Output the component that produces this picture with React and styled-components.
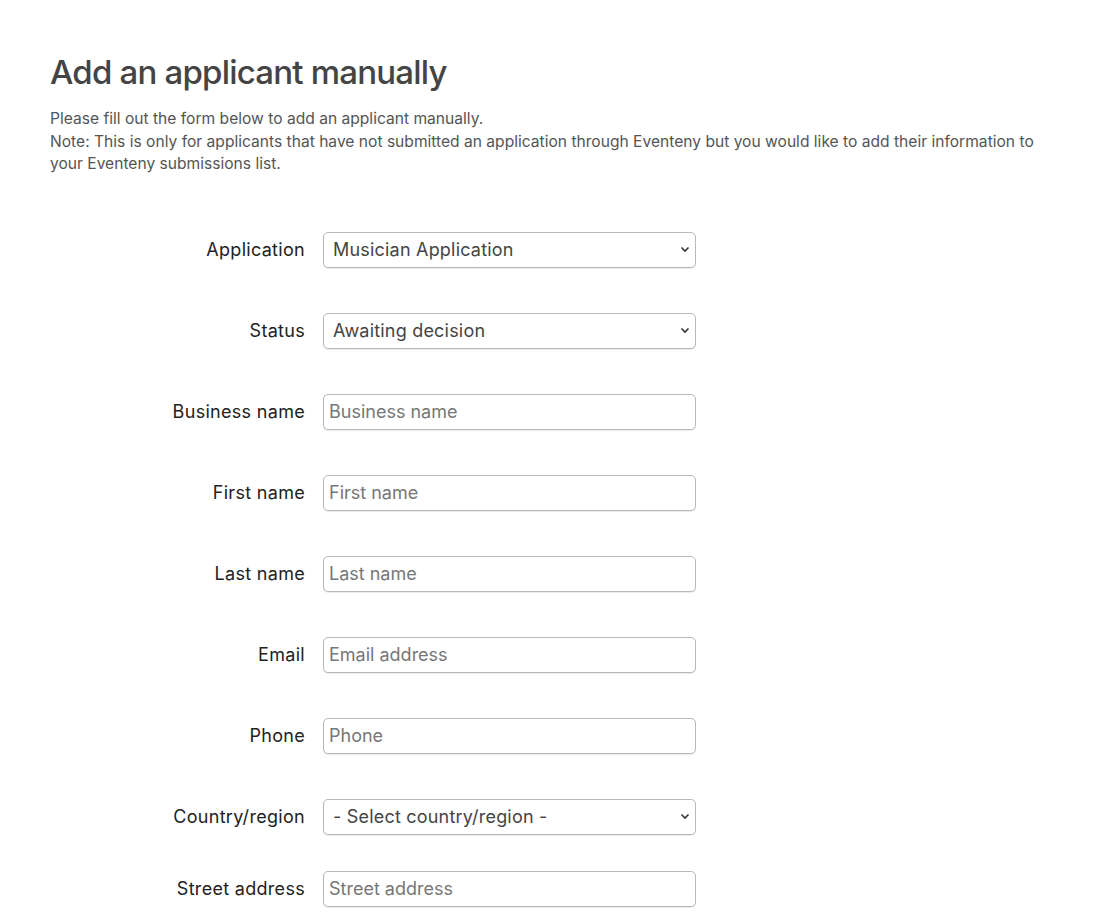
import React from "react";
import styled, { createGlobalStyle } from "styled-components";

const GlobalStyle = createGlobalStyle`
  body {
    margin: 0;
    background: #ffffff;
    font-family: Inter, "Noto Sans", sans-serif;
  }
`;

const Page = styled.div`
  padding: 50px 50px 0 50px;
  max-width: 1000px;
`;

const Title = styled.h1`
  margin: 0;
  font-size: 33px;
  line-height: 44px;
  font-weight: 500;
  color: #444444;
  letter-spacing: -0.8px;
`;

const Intro = styled.p`
  margin: 14px 0 0 0;
  font-size: 15.6px;
  line-height: 22.5px;
  color: #555555;
  letter-spacing: 0;
`;

const Form = styled.form`
  display: flex;
  flex-direction: column;
  margin-top: 56px;
`;

const Row = styled.div`
  display: grid;
  grid-template-columns: 255px 373px;
  column-gap: 18px;
  align-items: center;
  margin-bottom: ${(p) => (p.$tight ? "36px" : "45px")};
`;

const Label = styled.label`
  text-align: right;
  font-size: 18px;
  color: #222222;
  letter-spacing: 0.3px;
`;

const fieldBase = `
  box-sizing: border-box;
  width: 373px;
  height: 36px;
  border: 1px solid #b8b8b8;
  border-radius: 5px;
  box-shadow: 0 1px 1px rgba(0, 0, 0, 0.08);
  background: #ffffff;
  font-family: Inter, "Noto Sans", sans-serif;
  font-size: 18px;
  outline: none;
`;

const Input = styled.input`
  ${fieldBase}
  padding: 0 5px;
  letter-spacing: 0;
  color: #333333;
  &::placeholder {
    color: #777777;
  }
`;

const SelectWrap = styled.div`
  position: relative;
  width: 373px;
`;

const Select = styled.select`
  ${fieldBase}
  appearance: none;
  padding: 0 30px 0 9px;
  letter-spacing: 0.2px;
  color: #444444;
`;

const Chevron = styled.svg`
  position: absolute;
  right: 6px;
  top: 14px;
  width: 10px;
  height: 7px;
  pointer-events: none;
`;

function Dropdown({ id, value, options }) {
  return (
    <SelectWrap>
      <Select id={id} defaultValue={value}>
        {options.map((o) => (
          <option key={o}>{o}</option>
        ))}
      </Select>
      <Chevron viewBox="0 0 10 7">
        <path d="M1.5 1.5 L5 5 L8.5 1.5" fill="none" stroke="#333" strokeWidth="1.6" />
      </Chevron>
    </SelectWrap>
  );
}

const textFields = [
  ["business", "Business name", "Business name"],
  ["first", "First name", "First name"],
  ["last", "Last name", "Last name"],
  ["email", "Email", "Email address"],
  ["phone", "Phone", "Phone"],
];

export default function App() {
  return (
    <Page>
      <GlobalStyle />
      <Title>Add an applicant manually</Title>
      <Intro>
        Please fill out the form below to add an applicant manually.
        <br />
        Note: This is only for applicants that have not submitted an application through Eventeny but you would like to
        add their information to your Eventeny submissions list.
      </Intro>
      <Form>
        <Row>
          <Label htmlFor="application">Application</Label>
          <Dropdown id="application" value="Musician Application" options={["Musician Application", "Vendor Application"]} />
        </Row>
        <Row>
          <Label htmlFor="status">Status</Label>
          <Dropdown id="status" value="Awaiting decision" options={["Awaiting decision", "Approved", "Declined"]} />
        </Row>
        {textFields.map(([id, label, ph]) => (
          <Row key={id}>
            <Label htmlFor={id}>{label}</Label>
            <Input id={id} placeholder={ph} />
          </Row>
        ))}
        <Row $tight>
          <Label htmlFor="country">Country/region</Label>
          <Dropdown id="country" value="- Select country/region -" options={["- Select country/region -", "United States", "Canada"]} />
        </Row>
        <Row>
          <Label htmlFor="street">Street address</Label>
          <Input id="street" placeholder="Street address" />
        </Row>
      </Form>
    </Page>
  );
}
